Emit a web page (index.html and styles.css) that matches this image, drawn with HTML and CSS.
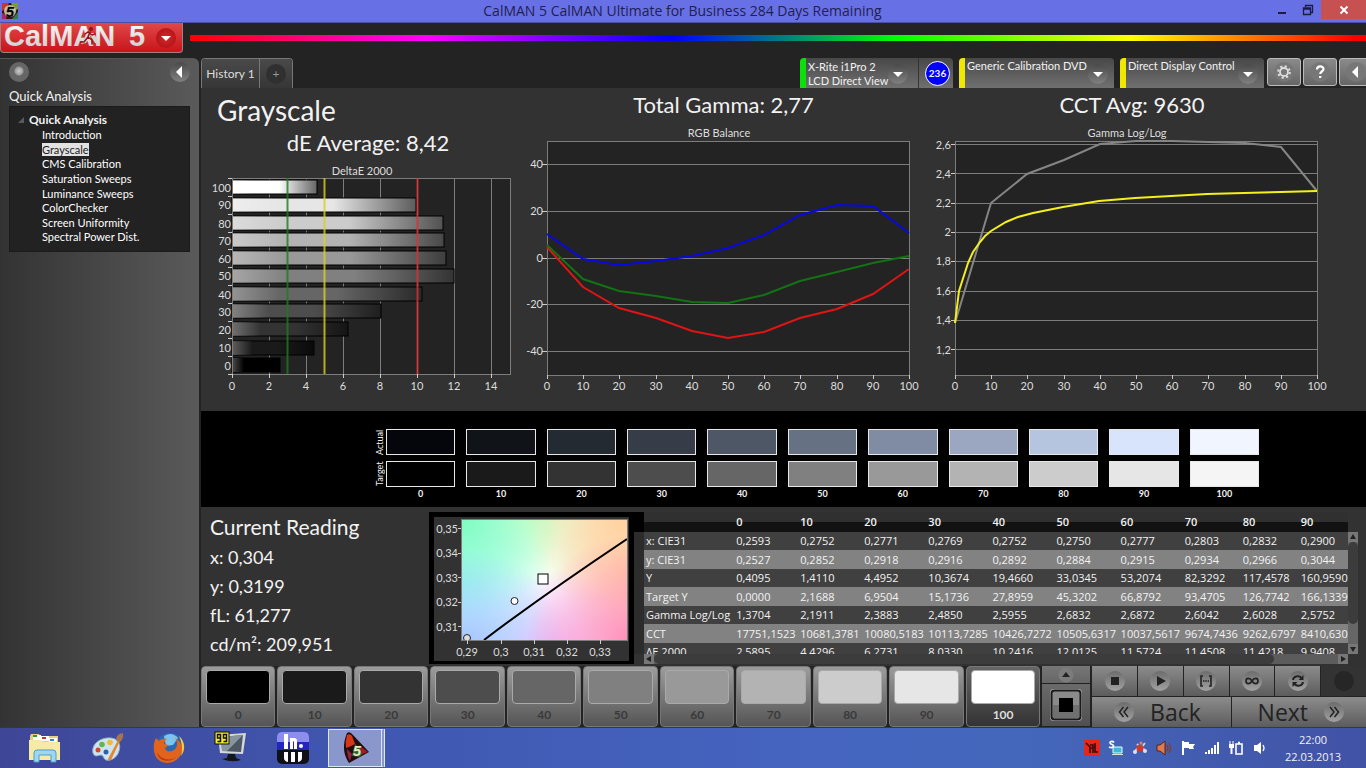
FILE: index.html
```html
<!DOCTYPE html>
<html lang="en">
<head>
  <meta charset="UTF-8" />
  <meta name="viewport" content="width=device-width, initial-scale=1.0"/>
  <title>CalMAN 5</title>
  <link rel="stylesheet" href="styles.css">
</head>
<body>
  <header class="titlebar">
    <svg class="app-icon" viewBox="0 0 16 16" width="16" height="16">
      <rect width="16" height="16" fill="#3a1518"/>
      <path d="M0 0h7l-3 6-4 2z" fill="#c33a2c"/><path d="M9 0h7v6l-4 2z" fill="#7b9a3a"/><path d="M0 10l5 2-1 4H0z" fill="#a02b63"/><path d="M16 9v7h-6z" fill="#2c7d52"/>
      <circle cx="8" cy="8" r="6" fill="#d9dcc0" opacity=".8"/>
      <text x="8" y="14" text-anchor="middle" class="icon-five">5</text>
    </svg>
    <h1>CalMAN 5 CalMAN Ultimate for Business 284 Days Remaining</h1>
    <div class="window-controls">
      <button aria-label="Minimize"><svg viewBox="0 0 10 10" width="10" height="10"><path d="M1 7h8v2H1z" fill="#1c1c3c"/></svg></button>
      <button aria-label="Restore"><svg viewBox="0 0 12 12" width="12" height="12"><path d="M3.500 3V1.500h7v7H9M1.500 4h7v6.500h-7zM1 5h8" fill="none" stroke="#1c1c3c" stroke-width="1.300"/></svg></button>
      <button class="close" aria-label="Close"><svg viewBox="0 0 10 10" width="10" height="10"><path d="M1.500 1.500l7 7m0-7l-7 7" stroke="#fff" stroke-width="2"/></svg></button>
    </div>
  </header>

  <div class="brandbar">
    <button class="logo" aria-label="CalMAN 5 menu">
      <svg viewBox="0 0 181 29" width="181" height="29">
        <defs>
          <linearGradient id="silver" x1="0" y1="0" x2="0" y2="1"><stop offset="0" stop-color="#fff"/><stop offset="1" stop-color="#c9c6c6"/></linearGradient>
          <radialGradient id="redKnob"><stop offset="0" stop-color="#d8262a"/><stop offset="1" stop-color="#b4161a"/></radialGradient>
        </defs>
        <text x="3" y="23">CalMAN</text><text x="128" y="23">5</text>
        <path d="M80 21l6-11h7l5 11-4-1-5-8-4 8z" fill="#d8d4d4"/>
        <g stroke="#8f1518" stroke-width="1.500" fill="none" stroke-linecap="round"><circle cx="90" cy="6" r="1.300" fill="#8f1518"/><path d="M89 9l-2 5 4 3v4M87 14l-4 5h-3M84 11l3-2 4 3 3-1"/></g>
        <circle cx="165" cy="15" r="10" fill="url(#redKnob)"/>
        <path d="M160 13h10l-5 5z" fill="#fff"/>
      </svg>
    </button>
    <div class="rainbow"></div>
  </div>

  <div class="workspace">
    <nav class="sidebar">
      <div class="sidebar-top">
        <button class="knob pin" aria-label="Pin"></button>
        <button class="knob" aria-label="Collapse"><svg viewBox="0 0 20 20" width="20" height="20"><path d="M12 4v12L6 10z" fill="#fff"/></svg></button>
      </div>
      <h2>Quick Analysis</h2>
      <div class="tree">
        <p><svg viewBox="0 0 6 6" width="6" height="6"><path d="M6 0v6H0z" fill="#5a5a5a"/></svg>Quick Analysis</p>
        <ul>
          <li><a href="#">Introduction</a></li>
          <li><a href="#" class="current">Grayscale</a></li>
          <li><a href="#">CMS Calibration</a></li>
          <li><a href="#">Saturation Sweeps</a></li>
          <li><a href="#">Luminance Sweeps</a></li>
          <li><a href="#">ColorChecker</a></li>
          <li><a href="#">Screen Uniformity</a></li>
          <li><a href="#">Spectral Power Dist.</a></li>
        </ul>
      </div>
    </nav>

    <main>
      <div class="tabs">
        <div class="history">
          <button class="tab">History 1</button>
          <button class="tab add" aria-label="Add history"><span>+</span></button>
        </div>
        <div class="devices">
          <div class="device meter">
            <button class="device-button">X-Rite i1Pro 2<br>LCD Direct View<span class="knob"><svg viewBox="0 0 20 20" width="20" height="20"><path d="M5 8h10l-5 5z" fill="#fff"/></svg></span></button>
            <span class="count">236</span>
          </div>
          <div class="device source">
            <button class="device-button">Generic Calibration DVD<span class="knob"><svg viewBox="0 0 20 20" width="20" height="20"><path d="M5 8h10l-5 5z" fill="#fff"/></svg></span></button>
          </div>
          <div class="device display">
            <button class="device-button">Direct Display Control<span class="knob"><svg viewBox="0 0 20 20" width="20" height="20"><path d="M5 8h10l-5 5z" fill="#fff"/></svg></span></button>
          </div>
          <div class="tools">
            <button aria-label="Settings"><svg viewBox="0 0 22 22" width="22" height="22"><circle cx="11" cy="11" r="10" fill="#777"/><circle cx="11" cy="11" r="4" fill="none" stroke="#ddd" stroke-width="1.800"/><circle cx="11" cy="11" r="5.800" fill="none" stroke="#ddd" stroke-width="2" stroke-dasharray="2.200 2.350"/></svg></button>
            <button aria-label="Help"><svg viewBox="0 0 22 22" width="22" height="22"><circle cx="11" cy="11" r="10" fill="#777"/><path d="M8 8.500c0-4 6.500-4 6.500-.5 0 2.500-3.300 2.500-3.300 5M11.200 15v2" fill="none" stroke="#fff" stroke-width="2.200"/></svg></button>
            <button aria-label="Hide panel"><svg viewBox="0 0 22 22" width="22" height="22"><circle cx="11" cy="11" r="10" fill="#777"/><path d="M13 5v12l-6-6z" fill="#fff"/></svg></button>
          </div>
        </div>
      </div>

      <section class="charts">
        <div class="chart">
          <h2 class="page-title">Grayscale</h2>
          <h3 class="de-average">dE Average: 8,42</h3>
          <svg viewBox="-31 -14 322 236">
            <defs>
              <linearGradient id="shade"><stop offset="0" stop-color="#fff" stop-opacity=".3"/><stop offset=".25" stop-color="#fff" stop-opacity="0"/><stop offset=".55" stop-color="#000" stop-opacity="0"/><stop offset="1" stop-color="#000" stop-opacity=".6"/></linearGradient>
            </defs>
            <text x="130" y="-3" class="mid">DeltaE 2000</text>
            <rect width="278" height="196" class="plot"/>
            <path class="grid" d="M37 0v196M74 0v196M111 0v196M148 0v196M185 0v196M222 0v196M259 0v196"/>
            <g class="bars">
              <rect y="2" width="85" height="14" fill="#fff"/>
              <rect y="20" width="184" height="14" fill="#e6e6e6"/>
              <rect y="38" width="211" height="14" fill="#ccc"/>
              <rect y="55" width="212" height="14" fill="#b3b3b3"/>
              <rect y="73" width="214" height="14" fill="#999"/>
              <rect y="91" width="222" height="14" fill="#808080"/>
              <rect y="109" width="190" height="14" fill="#666"/>
              <rect y="126" width="149" height="14" fill="#4d4d4d"/>
              <rect y="144" width="116" height="14" fill="#333"/>
              <rect y="163" width="82" height="14" fill="#1a1a1a"/>
              <rect y="180" width="48" height="14" fill="#000"/>
            </g>
            <g fill="url(#shade)">
              <rect y="2" width="85" height="14"/><rect y="20" width="184" height="14"/><rect y="38" width="211" height="14"/><rect y="55" width="212" height="14"/><rect y="73" width="214" height="14"/><rect y="91" width="222" height="14"/><rect y="109" width="190" height="14"/><rect y="126" width="149" height="14"/><rect y="144" width="116" height="14"/><rect y="163" width="82" height="14"/><rect y="180" width="48" height="14"/>
            </g>
            <rect width="278" height="196" class="frame"/>
            <path class="tick" d="M-4 0h4M-4 18h4M-4 36h4M-4 54h4M-4 71h4M-4 89h4M-4 107h4M-4 125h4M-4 143h4M-4 160h4M-4 178h4M-4 196h4M0 196v4M37 196v4M74 196v4M111 196v4M148 196v4M185 196v4M222 196v4M259 196v4"/>
            <path d="M55.500 0v196" stroke="#1f7a1f" stroke-width="2" opacity=".8"/>
            <path d="M92.500 0v196" stroke="#d8d21c" stroke-width="2" opacity=".8"/>
            <path d="M185.500 0v196" stroke="#e03030" stroke-width="2" opacity=".8"/>
            <g class="end">
              <text x="-1" y="14">100</text><text x="-1" y="31">90</text><text x="-1" y="50">80</text><text x="-1" y="67">70</text><text x="-1" y="85">60</text><text x="-1" y="102">50</text><text x="-1" y="121">40</text><text x="-1" y="138">30</text><text x="-1" y="156">20</text><text x="-1" y="174">10</text><text x="-1" y="192">0</text>
            </g>
            <g class="mid">
              <text x="0" y="212">0</text><text x="37" y="212">2</text><text x="74" y="212">4</text><text x="111" y="212">6</text><text x="148" y="212">8</text><text x="185" y="212">10</text><text x="222" y="212">12</text><text x="259" y="212">14</text>
            </g>
          </svg>
        </div>

        <div class="chart">
          <h3>Total Gamma: 2,77</h3>
          <svg viewBox="-24 -15 401 269">
            <text x="172" y="-4" class="mid">RGB Balance</text>
            <rect width="362" height="234" class="plot"/>
            <path class="grid" d="M0 23h362M0 70h362M0 117h362M0 163h362M0 210h362"/>
            <rect width="362" height="234" class="frame"/>
            <path class="tick" d="M-5 23h5M-5 70h5M-5 117h5M-5 163h5M-5 210h5M0 234v4M36 234v4M72 234v4M109 234v4M145 234v4M181 234v4M217 234v4M253 234v4M290 234v4M326 234v4M362 234v4"/>
            <polyline class="line" stroke="#e01414" points="0,106 36,146 72,167 109,177 145,190 181,197 217,191 253,177 290,168 326,153 362,128"/>
            <polyline class="line" stroke="#127312" points="0,104 36,138 72,150 109,155 145,161 181,162 217,154 253,140 290,131 326,122 362,115"/>
            <polyline class="line" stroke="#0808e0" points="0,93 36,118 72,124 109,120 145,115 181,107 217,94 253,74 290,64 326,65 362,92"/>
            <g class="end">
              <text x="-4" y="27">40</text><text x="-4" y="74">20</text><text x="-4" y="121">0</text><text x="-4" y="167">-20</text><text x="-4" y="214">-40</text>
            </g>
            <g class="mid">
              <text x="0" y="249">0</text><text x="36" y="249">10</text><text x="72" y="249">20</text><text x="109" y="249">30</text><text x="145" y="249">40</text><text x="181" y="249">50</text><text x="217" y="249">60</text><text x="253" y="249">70</text><text x="290" y="249">80</text><text x="326" y="249">90</text><text x="362" y="249">100</text>
            </g>
          </svg>
        </div>

        <div class="chart">
          <h3>CCT Avg: 9630</h3>
          <svg viewBox="-31 -15 416 269">
            <text x="172" y="-4" class="mid">Gamma Log/Log</text>
            <rect width="362" height="234" class="plot"/>
            <path class="grid" d="M0 3h362M0 32h362M0 62h362M0 91h362M0 120h362M0 150h362M0 179h362M0 208h362"/>
            <rect width="362" height="234" class="frame"/>
            <path class="tick" d="M-4 3h4M-4 32h4M-4 62h4M-4 91h4M-4 120h4M-4 150h4M-4 179h4M-4 208h4M0 234v4M36 234v4M72 234v4M109 234v4M145 234v4M181 234v4M217 234v4M253 234v4M290 234v4M326 234v4M362 234v4"/>
            <polyline class="line" stroke="#858585" points="0,182 36,62 72,33 109,19 145,3 181,0 217,0 253,1 290,2 326,6 362,50"/>
            <polyline class="line" stroke="#f4f01e" points="0,182 4,150 13,122 18,111 25,101 30,95 36,90 51,81 63,76 78,72 108,66 144,60 180,57 216,55 252,53 289,52 326,51 362,50"/>
            <g class="end">
              <text x="-4" y="8">2,6</text><text x="-4" y="37">2,4</text><text x="-4" y="66">2,2</text><text x="-4" y="95">2</text><text x="-4" y="124">1,8</text><text x="-4" y="154">1,6</text><text x="-4" y="183">1,4</text><text x="-4" y="213">1,2</text>
            </g>
            <g class="mid">
              <text x="0" y="249">0</text><text x="36" y="249">10</text><text x="72" y="249">20</text><text x="109" y="249">30</text><text x="145" y="249">40</text><text x="181" y="249">50</text><text x="217" y="249">60</text><text x="253" y="249">70</text><text x="290" y="249">80</text><text x="326" y="249">90</text><text x="362" y="249">100</text>
            </g>
          </svg>
        </div>
      </section>

      <section class="swatches">
        <div class="swatch-row">
          <span class="side">Actual</span>
          <i class="a0"></i><i class="a10"></i><i class="a20"></i><i class="a30"></i><i class="a40"></i><i class="a50"></i><i class="a60"></i><i class="a70"></i><i class="a80"></i><i class="a90"></i><i class="a100"></i>
        </div>
        <div class="swatch-row">
          <span class="side">Target</span>
          <i class="g0"></i><i class="g10"></i><i class="g20"></i><i class="g30"></i><i class="g40"></i><i class="g50"></i><i class="g60"></i><i class="g70"></i><i class="g80"></i><i class="g90"></i><i class="g100"></i>
        </div>
        <div class="swatch-row labels">
          <span class="side"></span>
          <b>0</b><b>10</b><b>20</b><b>30</b><b>40</b><b>50</b><b>60</b><b>70</b><b>80</b><b>90</b><b>100</b>
        </div>
      </section>

      <section class="readings">
        <div class="current-reading">
          <h3>Current Reading</h3>
          <p>x: 0,304</p>
          <p>y: 0,3199</p>
          <p>fL: 61,277</p>
          <p>cd/m²: 209,951</p>
        </div>

        <div class="cie">
          <svg viewBox="-27 -2 195 144" width="195" height="144">
            <defs>
              <radialGradient id="cGreen"><stop offset="0" stop-color="#7dfcc0"/><stop offset="1" stop-color="#7dfcc0" stop-opacity="0"/></radialGradient>
              <radialGradient id="cLime"><stop offset="0" stop-color="#d2ffc0"/><stop offset="1" stop-color="#d2ffc0" stop-opacity="0"/></radialGradient>
              <radialGradient id="cOrange"><stop offset="0" stop-color="#ffd2a0"/><stop offset="1" stop-color="#ffd2a0" stop-opacity="0"/></radialGradient>
              <radialGradient id="cPink"><stop offset="0" stop-color="#ff86b4"/><stop offset="1" stop-color="#ff86b4" stop-opacity="0"/></radialGradient>
              <radialGradient id="cViolet"><stop offset="0" stop-color="#eebcff"/><stop offset="1" stop-color="#eebcff" stop-opacity="0"/></radialGradient>
              <radialGradient id="cBlue"><stop offset="0" stop-color="#a3c2ff"/><stop offset="1" stop-color="#a3c2ff" stop-opacity="0"/></radialGradient>
              <radialGradient id="cCyan"><stop offset="0" stop-color="#a0ffff"/><stop offset="1" stop-color="#a0ffff" stop-opacity="0"/></radialGradient>
              <clipPath id="cieClip"><rect width="166" height="121"/></clipPath>
            </defs>
            <g clip-path="url(#cieClip)">
              <rect width="166" height="121" fill="#fff"/>
              <circle cx="75" cy="-15" r="90" fill="url(#cLime)"/>
              <circle cx="160" cy="0" r="95" fill="url(#cOrange)"/>
              <circle cx="175" cy="50" r="80" fill="url(#cOrange)"/>
              <circle cx="90" cy="135" r="85" fill="url(#cViolet)"/>
              <circle cx="-5" cy="62" r="95" fill="url(#cCyan)"/>
              <circle cx="0" cy="0" r="100" fill="url(#cGreen)"/>
              <circle cx="5" cy="130" r="100" fill="url(#cBlue)"/>
              <circle cx="175" cy="125" r="110" fill="url(#cPink)"/>
              <path d="M23 121Q85 74 166 20" fill="none" stroke="#000" stroke-width="2"/>
              <circle cx="6" cy="119" r="3.500" fill="#ddd" stroke="#222"/>
            </g>
            <rect width="166" height="121" class="frame"/>
            <rect x="77" y="55" width="10" height="10" fill="#fff" stroke="#000"/>
            <circle cx="53.500" cy="82" r="3.500" fill="#fff" stroke="#222"/>
            <path class="tick" d="M-3 9h3M-3 34h3M-3 58h3M-3 83h3M-3 107h3M6 121v4M40 121v4M73 121v4M106 121v4M139 121v4"/>
            <g class="end"><text x="-3" y="14">0,35</text><text x="-3" y="38">0,34</text><text x="-3" y="63">0,33</text><text x="-3" y="87">0,32</text><text x="-3" y="112">0,31</text></g>
            <g class="mid"><text x="6" y="137">0,29</text><text x="40" y="137">0,3</text><text x="73" y="137">0,31</text><text x="106" y="137">0,32</text><text x="139" y="137">0,33</text></g>
          </svg>
        </div>

        <div class="data">
          <div class="data-view">
            <table>
              <colgroup><col class="c-label"><col><col><col><col><col><col><col><col class="c-narrow"><col class="c-narrow"><col></colgroup>
              <thead>
                <tr><td></td><th>0</th><th>10</th><th>20</th><th>30</th><th>40</th><th>50</th><th>60</th><th>70</th><th>80</th><th>90</th></tr>
              </thead>
              <tbody>
                <tr><th>x: CIE31</th><td>0,2593</td><td>0,2752</td><td>0,2771</td><td>0,2769</td><td>0,2752</td><td>0,2750</td><td>0,2777</td><td>0,2803</td><td>0,2832</td><td>0,2900</td></tr>
                <tr><th>y: CIE31</th><td>0,2527</td><td>0,2852</td><td>0,2918</td><td>0,2916</td><td>0,2892</td><td>0,2884</td><td>0,2915</td><td>0,2934</td><td>0,2966</td><td>0,3044</td></tr>
                <tr><th>Y</th><td>0,4095</td><td>1,4110</td><td>4,4952</td><td>10,3674</td><td>19,4660</td><td>33,0345</td><td>53,2074</td><td>82,3292</td><td>117,4578</td><td>160,9590</td></tr>
                <tr><th>Target Y</th><td>0,0000</td><td>2,1688</td><td>6,9504</td><td>15,1736</td><td>27,8959</td><td>45,3202</td><td>66,8792</td><td>93,4705</td><td>126,7742</td><td>166,1339</td></tr>
                <tr><th>Gamma Log/Log</th><td>1,3704</td><td>2,1911</td><td>2,3883</td><td>2,4850</td><td>2,5955</td><td>2,6832</td><td>2,6872</td><td>2,6042</td><td>2,6028</td><td>2,5752</td></tr>
                <tr><th>CCT</th><td>17751,1523</td><td>10681,3781</td><td>10080,5183</td><td>10113,7285</td><td>10426,7272</td><td>10505,6317</td><td>10037,5617</td><td>9674,7436</td><td>9262,6797</td><td>8410,630</td></tr>
                <tr><th>ΔE 2000</th><td>2,5895</td><td>4,4296</td><td>6,2731</td><td>8,0330</td><td>10,2416</td><td>12,0125</td><td>11,5724</td><td>11,4508</td><td>11,4218</td><td>9,9408</td></tr>
              </tbody>
            </table>
          </div>
          <div class="vscroll">
            <svg viewBox="0 0 10 10" width="10" height="10"><path d="M5 2l3 5H2z" fill="#222"/></svg>
            <span class="thumb"></span>
            <svg viewBox="0 0 10 10" width="10" height="10"><path d="M5 8l3-5H2z" fill="#222"/></svg>
          </div>
          <div class="hscroll">
            <svg viewBox="0 0 10 10" width="10" height="10"><path d="M2 5l5-3v6z" fill="#222"/></svg>
            <span class="thumb"></span>
            <svg viewBox="0 0 10 10" width="10" height="10"><path d="M8 5L3 2v6z" fill="#222"/></svg>
          </div>
        </div>
      </section>

      <section class="controls">
        <div class="patches">
          <button><i class="g0"></i>0</button>
          <button><i class="g10"></i>10</button>
          <button><i class="g20"></i>20</button>
          <button><i class="g30"></i>30</button>
          <button><i class="g40"></i>40</button>
          <button><i class="g50"></i>50</button>
          <button><i class="g60"></i>60</button>
          <button><i class="g70"></i>70</button>
          <button><i class="g80"></i>80</button>
          <button><i class="g90"></i>90</button>
          <button class="selected"><i class="white"></i>100</button>
        </div>
        <div class="pattern">
          <button aria-label="Expand"><svg viewBox="0 0 16 16" width="16" height="16"><circle cx="8" cy="8" r="7.500" fill="#7c7c7c"/><path d="M8 5l4 5H4z" fill="#222"/></svg></button>
          <button aria-label="Window pattern"><svg viewBox="0 0 34 34" width="34" height="34"><rect x="1" y="1" width="32" height="32" rx="4" fill="#bbb"/><rect x="2.500" y="2.500" width="29" height="29" rx="3" fill="#8a8a8a" stroke="#1a1a1a" stroke-width="2"/><path d="M4 17h26v13H4z" fill="#707070"/><path d="M10 10h14v14H10z" fill="#000"/></svg></button>
        </div>
        <div class="transport">
          <div class="transport-row">
            <button aria-label="Stop"><svg viewBox="0 0 20 20" width="20" height="20"><circle cx="10" cy="10" r="10" fill="url(#knob)"/><path d="M6 6h8v8H6z" fill="#222"/></svg></button>
            <button aria-label="Play"><svg viewBox="0 0 20 20" width="20" height="20"><circle cx="10" cy="10" r="10" fill="url(#knob)"/><path d="M7 5l9 5-9 5z" fill="#222"/></svg></button>
            <button aria-label="Read series"><svg viewBox="0 0 20 20" width="20" height="20"><circle cx="10" cy="10" r="10" fill="url(#knob)"/><path d="M7 5H5v10h2M13 5h2v10h-2M7 10h1.500M9.300 10h1.500M11.700 10H13" fill="none" stroke="#222" stroke-width="1.600"/></svg></button>
            <button aria-label="Continuous"><svg viewBox="0 0 20 20" width="20" height="20"><circle cx="10" cy="10" r="10" fill="url(#knob)"/><path d="M10 10c-2-3.500-6-3.500-6 0s4 3.500 6 0 6-3.500 6 0-4 3.500-6 0z" fill="none" stroke="#222" stroke-width="1.700"/></svg></button>
            <button aria-label="Refresh"><svg viewBox="0 0 20 20" width="20" height="20"><circle cx="10" cy="10" r="10" fill="url(#knob)"/><path d="M5 9c.5-4 6-5 8.500-2M15 11c-.5 4-6 5-8.500 2" fill="none" stroke="#222" stroke-width="2"/><path d="M15.500 4v5h-5zM4.500 16v-5h5z" fill="#222"/></svg></button>
            <button class="dark" aria-label="Status"><svg viewBox="0 0 20 20" width="20" height="20"><circle cx="10" cy="10" r="10" fill="#262626"/></svg></button>
          </div>
          <div class="transport-row big">
            <button><svg viewBox="0 0 20 20" width="20" height="20"><defs><linearGradient id="knob" x1="0" y1="0" x2="0" y2="1"><stop offset="0" stop-color="#6c6c6c"/><stop offset="1" stop-color="#a2a2a2"/></linearGradient></defs><circle cx="10" cy="10" r="10" fill="url(#knob)"/><path d="M9.500 5L5.500 10l4 5M14 5l-4 5 4 5" fill="none" stroke="#222" stroke-width="1.500"/></svg>Back</button>
            <button>Next<svg viewBox="0 0 20 20" width="20" height="20"><circle cx="10" cy="10" r="10" fill="url(#knob)"/><path d="M6 5l4 5-4 5M10.500 5l4 5-4 5" fill="none" stroke="#222" stroke-width="1.500"/></svg></button>
          </div>
        </div>
      </section>
    </main>
  </div>

  <footer class="taskbar">
    <div class="apps">
      <button aria-label="File Explorer"><svg viewBox="0 0 34 32" width="34" height="32">
        <path d="M2 4l1-2h8l1 2h18v22H2z" fill="#e6cf7e"/><path d="M5 3h8v5H5z" fill="#fff"/><path d="M5 3h4v2H5z" fill="#2c9d3c"/><path d="M13 4h8v5h-8z" fill="#fff"/><path d="M14 5h4v2h-4z" fill="#c33"/><path d="M21 6h8v4h-8z" fill="#fff"/><path d="M22 7h4v2h-4z" fill="#38c"/>
        <path d="M1 8h12l2 2h17v18H1z" fill="#f7eaa6"/><path d="M6 30V21q0-3 3-3h16q3 0 3 3v9h-5v-7H11v7z" fill="#9fd6f0" stroke="#4d9fcb"/>
      </svg></button>
      <button aria-label="Paint"><svg viewBox="0 0 34 32" width="34" height="32">
        <path d="M3 21C1 11 12 5 21 6c8 1 10 7 8 13-2 7-8 10-13 9-3-1-2-5-5-5-3 0-6 3-8-2z" fill="#cfe4f2" stroke="#8fb0cc"/>
        <circle cx="8" cy="18" r="2.500" fill="#d9452b"/><circle cx="12" cy="12.500" r="2.800" fill="#66b54a"/><circle cx="20" cy="10.500" r="2.800" fill="#f0b93a"/><circle cx="16" cy="20" r="2.500" fill="#2e5fae"/>
        <path d="M28 8l2 1-9 19q-3 2-3-1z" fill="#e08a2c"/><path d="M26 8q0-6 7-7 1 6-3 9z" fill="#a8744c"/>
      </svg></button>
      <button aria-label="Firefox"><svg viewBox="0 0 34 32" width="34" height="32">
        <circle cx="18" cy="15" r="14" fill="#2a68b4"/><path d="M12 4q8-5 14 2l-5 7-7 1z" fill="#7cc4ee"/>
        <path d="M4 6l3 3c3-3 7-2 8-2-3 2-3 4-3 5l5 1-4 3c1 5 8 4 11 0 2-4 1-7-1-10 9 5 8 14 5 18-6 9-19 9-24 1C1 19 1 11 4 6z" fill="#e2641c"/>
        <path d="M27 4c6 5 7 14 2 20 2-7 1-13-2-20z" fill="#f8c93c"/><path d="M5 20c3 7 12 10 20 5-7 6-19 5-20-5z" fill="#b8380f"/>
      </svg></button>
      <button aria-label="System Monitor"><svg viewBox="0 0 34 32" width="34" height="32">
        <path d="M4 3l28-2-3 21-23-1z" fill="#d5d8da"/><path d="M7 5l22-2-2 17-19-1z" fill="#4c5965"/><path d="M7 5l22-2-16 16H8z" fill="#8795a0"/><path d="M14 22h7l1 4 5 2q-9 3-19-1l5-1z" fill="#14161a"/>
        <rect x="1" y="0" width="14" height="12" fill="#f7ef22" stroke="#111"/><path d="M6.500 6H3.500V2.500h3v7h-3M12.500 6h-3V2.500h3v7h-3" fill="none" stroke="#111" stroke-width="1.500"/>
      </svg></button>
      <button aria-label="HCFR"><svg viewBox="0 0 34 32" width="34" height="32">
        <rect x="1" width="32" height="32" rx="5" fill="#101018"/><path d="M1 18V5q0-5 5-5h22q5 0 5 5v13z" fill="#2424c0"/><path d="M1 10V5q0-5 5-5h22q5 0 5 5v5z" fill="#8d8df0"/>
        <path d="M8 2h4v15H8zM14 6h4q3 0 3 3v8h-3V9h-1v8h-3zM8 20h4v10q-4-1-4-4zM15 20h4v10h-4zM22 20h4v6q0 3-4 4z" fill="#fff"/><circle cx="25" cy="14" r="2" fill="#fff"/>
      </svg></button>
      <button class="running" aria-label="CalMAN"><svg viewBox="0 0 34 32" width="34" height="32">
        <path d="M8 1q3-2 6 2l16 17-20 11Q1 18 8 1z" fill="#240c0c"/><path d="M8 3q3-2 5 1l3 8-6 3-3 1q-1-6 1-13z" fill="#d3381b"/><path d="M16 12l10 8-6 5-7-1z" fill="#35632c"/><path d="M20 13l9 7-6 2z" fill="#a01c28"/><path d="M8 17l5 5-2 7q-3-5-3-12z" fill="#8c2440"/>
        <text x="18" y="24" text-anchor="middle" class="task-five">5</text>
      </svg></button>
    </div>
    <div class="tray">
      <svg viewBox="0 0 16 16" width="16" height="16"><path d="M0 0h16v16H0z" fill="#e8261c"/><path d="M2 3l4 4v6M6 5h3v8M6 8h3M11 3v9h3M11 7h-1" fill="none" stroke="#3a0a0a" stroke-width="1.600"/></svg>
      <svg viewBox="0 0 16 16" width="16" height="16"><path d="M5 7h9v6H5z" fill="#42b6d8" stroke="#dff"/><path d="M4 14h11v1H4z" fill="#ddd"/><path d="M6 2.500Q5 1 3 1.500 1 2.500 3 4q3 1 2.500 2.500Q4 8.500 1 7" fill="none" stroke="#fff" stroke-width="1.600"/></svg>
      <svg viewBox="0 0 16 16" width="16" height="16"><path d="M2 12l5-5 6 3M5 4l4 4 4-5" stroke="#c9d0dc" stroke-width="2" fill="none"/><circle cx="8" cy="8" r="3.500" fill="#cf3a2a"/><circle cx="3" cy="12" r="2" fill="#dcdfe6"/><circle cx="13" cy="11" r="2" fill="#dcdfe6"/><circle cx="9" cy="3" r="1.500" fill="#e77"/></svg>
      <svg viewBox="0 0 16 16" width="16" height="16"><path d="M1 5h3l5-4v14l-5-4H1z" fill="#e07a50" stroke="#5a2210"/><path d="M11 5q2 3 0 6M13 3q3 5 0 10" fill="none" stroke="#8a3a28" stroke-width="1.300"/></svg>
      <svg viewBox="0 0 16 16" width="16" height="16"><path d="M2 1h2v14H2z" fill="#fff"/><path d="M4 2h5v2h6l-2 3 1 2H9V8H4z" fill="#fff"/></svg>
      <svg viewBox="0 0 16 16" width="16" height="16"><path d="M1 12h2v2H1zM4 10h2v4H4zM7 8h2v6H7zM10 5h2v9h-2zM13 2h2v12h-2z" fill="#fff"/></svg>
      <svg viewBox="0 0 16 16" width="16" height="16"><path d="M8 4h6v10H8zM10 2.500h2" fill="none" stroke="#fff" stroke-width="1.600"/><path d="M1 4h5v4H4.500v6h-2V8H1zM1.500 1h1v3h-1zM4.500 1h1v3h-1z" fill="#fff"/></svg>
      <svg viewBox="0 0 16 16" width="16" height="16"><path d="M2 5h3l4-3v12l-4-3H2z" fill="#fff"/><path d="M11 5q2 3 0 6" fill="none" stroke="#fff" stroke-width="1.300"/></svg>
    </div>
    <div class="clock"><span>22:00</span><span>22.03.2013</span></div>
  </footer>
</body>
</html>
```

FILE: styles.css
```css
:root {
  --ui: Lato, "Open Sans", sans-serif;
  --segoe: "Open Sans", "Noto Sans", sans-serif;
  --bg: #232323;
  --panel: #323232;
  --text: #f2f2f2;
}

* {
  box-sizing: border-box;
}

body {
  margin: 0;
  min-height: 100vh;
  display: flex;
  flex-direction: column;
  background: var(--bg);
  color: var(--text);
  font-family: var(--ui);
  font-size: 12px;
  overflow: hidden;
}

h1, h2, h3, p, ul {
  margin: 0;
  padding: 0;
  font-weight: normal;
}

button {
  border: none;
  padding: 0;
  margin: 0;
  background: none;
  color: inherit;
  font-family: inherit;
  cursor: pointer;
}

svg {
  display: block;
  overflow: visible;
}

/* title bar */
.titlebar {
  display: flex;
  align-items: center;
  height: 23px;
  background: #6870e6;
  border-bottom: 1px solid #4a50a8;
}

.app-icon {
  margin-left: 2px;
}

.titlebar h1 {
  flex: 1;
  padding-left: 78px;
  text-align: center;
  font-family: var(--segoe);
  font-size: 14px;
  line-height: 22px;
  color: #1f2150;
}

.window-controls {
  display: flex;
  align-self: flex-start;
}

.window-controls button {
  display: flex;
  align-items: center;
  justify-content: center;
  width: 26px;
  height: 19px;
}

.window-controls .close {
  width: 45px;
  background: #c75050;
}

/* logo and rainbow line */
.brandbar {
  display: flex;
  height: 35px;
}

.logo {
  height: 30px;
  background: linear-gradient(#e04848, #c8141a);
  border: 1px solid #a08080;
  border-top: none;
  border-radius: 0 0 4px 4px;
}

.rainbow {
  flex: 1;
  height: 6px;
  margin: 12px 0 0 7px;
  background: linear-gradient(to right, #f00 0%, #f0f 20%, #00f 41%, #0f0 60%, #ff0 80%, #f00 99%);
}

/* sidebar */
.workspace {
  flex: 1;
  display: flex;
  min-height: 0;
}

.sidebar {
  width: 199px;
  flex-shrink: 0;
  padding: 3px 9px;
  background: linear-gradient(to right, #333, #5a5a5a);
  border-top: 1px solid #555;
  border-radius: 0 6px 0 0;
}

.sidebar-top {
  display: flex;
  justify-content: space-between;
}

.knob {
  display: block;
  width: 20px;
  height: 20px;
  border-radius: 50%;
  background: linear-gradient(#4a4a4a, #808080);
}

.pin {
  background: radial-gradient(circle at 50% 45%, #ccc 0, #999 4px, #666 5px, #666 100%);
}

.sidebar h2 {
  font-size: 13px;
  line-height: 16px;
  margin-top: 6px;
}

.tree {
  margin-top: 2px;
  padding: 5px 8px;
  height: 146px;
  background: #222;
  border: 1px solid #1b1b1b;
}

.tree p {
  display: flex;
  align-items: center;
  gap: 5px;
  font-size: 12px;
  line-height: 15px;
  font-weight: bold;
}

.tree ul {
  display: grid;
  grid-auto-rows: 1fr;
  height: 117px;
  padding-left: 24px;
  margin-top: 1px;
  font-size: 11px;
  line-height: 14px;
  list-style: none;
}

.tree a {
  color: #fff;
  text-decoration: none;
}

.tree .current {
  background: #e2e2e2;
  color: #222;
}

/* tabs */
main {
  flex: 1;
  min-width: 0;
  display: flex;
  flex-direction: column;
  margin-left: 2px;
  background: var(--panel);
}

.tabs {
  display: flex;
  justify-content: space-between;
  height: 30px;
  background: var(--bg);
  overflow: hidden;
}

.history, .devices, .tools {
  display: flex;
}

.history {
  border: 1px solid #777;
  border-bottom: none;
  border-radius: 4px 4px 0 0;
}

.tab {
  width: 57px;
  font-size: 12px;
  color: #ddd;
  background: linear-gradient(#4a4a4a, #363636);
  border-radius: 4px 0 0 0;
}

.add {
  width: 33px;
  border-left: 1px solid #777;
  border-radius: 0 4px 0 0;
}

.add span {
  display: block;
  width: 20px;
  margin: 0 auto;
  line-height: 20px;
  border-radius: 50%;
  background: #303030;
  color: #999;
}

.device {
  display: flex;
  margin-right: 6px;
  border-left: 6px solid #f0e800;
  border-radius: 4px 4px 0 0;
  background: linear-gradient(#484848, #707070);
}

.meter {
  border-left-color: #0be00b;
}

.device-button {
  position: relative;
  width: 113px;
  padding: 1px 0 0 2px;
  text-align: left;
  font-size: 11px;
  line-height: 14px;
  display: flex;
}

/* the arrow knob sits over the end of the label area */
.device-button .knob {
  position: absolute;
  right: 6px;
  top: 6px;
}

.meter .device-button {
  display: block;
  border-right: 1px solid #333;
}

.meter .knob {
  right: 10px;
}

.source .device-button {
  width: 149px;
}

.display .device-button {
  width: 138px;
}

.display {
  margin-right: 3px;
}

.count {
  align-self: center;
  width: 25px;
  margin: 0 3px 0 6px;
  line-height: 23px;
  border: 1px solid #fff;
  border-radius: 50%;
  background: #00f;
  font-size: 10px;
  font-weight: bold;
  text-align: center;
}

.tools {
  gap: 2px;
  margin-right: -7px;
}

.tools button {
  display: flex;
  align-items: center;
  justify-content: center;
  width: 34px;
  height: 28px;
  border: 1px solid #bbb;
  border-radius: 3px;
  background: linear-gradient(#8a8a8a, #666);
}

/* charts */
.charts {
  flex: 1;
  display: grid;
  grid-template-columns: 322fr 401fr 416fr;
  align-items: start;
  padding-right: 26px;
}

.chart svg {
  width: 100%;
  height: auto;
}

.chart h3 {
  font-size: 22px;
  line-height: 34px;
  height: 38px;
  text-align: center;
}

.chart .page-title {
  padding-left: 16px;
  font-size: 28px;
  line-height: 44px;
}

.chart .de-average {
  height: 32px;
  line-height: 22px;
  padding-left: 12px;
}

svg text {
  font-size: 11px;
  fill: #ddd;
}

svg .icon-five, svg .task-five {
  font: italic bold 15px "Liberation Sans", sans-serif;
  fill: #000;
}

svg .task-five {
  fill: #dfe8c0;
}

.logo svg text {
  font: bold 29px "Liberation Sans", sans-serif;
  fill: url(#silver);
}

.mid {
  text-anchor: middle;
}

.end {
  text-anchor: end;
}

.plot {
  fill: #232323;
}

.frame, .grid, .tick {
  fill: none;
  stroke: #7c7c7c;
  shape-rendering: crispEdges;
}

.tick {
  stroke: #ccc;
}

.bars rect {
  stroke: #000;
}

.line {
  fill: none;
  stroke-width: 2;
}

/* actual and target swatches */
.swatches {
  padding: 18px 107px 6px 173px;
  height: 96px;
  background: #000;
}

.swatch-row {
  display: flex;
  height: 26px;
  margin-bottom: 6px;
}

.swatch-row i {
  flex: 1;
  border: 1px solid #e8e8e8;
}

.swatch-row b {
  flex: 1;
}

.swatch-row i + i, .swatch-row b + b {
  margin-left: 11px;
}

.swatch-row .side {
  writing-mode: vertical-rl;
  transform: rotate(180deg);
  width: 12px;
  font-size: 9px;
  line-height: 12px;
  text-align: center;
  white-space: nowrap;
}

.swatches .labels {
  margin-top: -5px;
  height: 12px;
  font-size: 9px;
  line-height: 12px;
  text-align: center;
}

.a0 { background: #05060c; }
.a10 { background: #101418; }
.a20 { background: #232a31; }
.a30 { background: #373c49; }
.a40 { background: #4e5766; }
.a50 { background: #667184; }
.a60 { background: #7f8ca3; }
.a70 { background: #9ba7c0; }
.a80 { background: #b5c4df; }
.a90 { background: #d7e4fc; }
.a100 { background: #f0f5ff; }

.g0 { background: #000; }
.g10 { background: #1a1a1a; }
.g20 { background: #333; }
.g30 { background: #4d4d4d; }
.g40 { background: #666; }
.g50 { background: #808080; }
.g60 { background: #999; }
.g70 { background: #b3b3b3; }
.g80 { background: #ccc; }
.g90 { background: #e6e6e6; }
.g100 { background: #f5f5f5; }
.white { background: #fff; }

/* readings */
.readings {
  display: flex;
  height: 159px;
  padding-top: 5px;
}

.current-reading {
  flex: 0 0 228px;
  padding-left: 9px;
}

.current-reading h3 {
  font-size: 21px;
  line-height: 30px;
  margin-bottom: 1px;
}

.current-reading p {
  font-size: 18px;
  line-height: 29px;
}

.cie {
  flex: 0 0 auto;
  align-self: flex-start;
  border: 5px solid #000;
  border-bottom-width: 3px;
}

.data {
  flex: 1;
  min-width: 0;
  display: grid;
  grid-template-columns: 1fr 10px;
  grid-template-rows: 142px 10px;
  margin-right: 8px;
}

.data-view {
  overflow: hidden;
}

table {
  width: 729px;
  table-layout: fixed;
  border-collapse: collapse;
  font-family: var(--segoe);
  font-size: 11px;
}

col {
  width: 64px;
}

.c-label {
  width: 95px;
}

.c-narrow {
  width: 58px;
}

td, th {
  height: 18px;
  padding: 0 0 0 2px;
  line-height: 18px;
  text-align: left;
  font-weight: normal;
  white-space: nowrap;
}

tr > :first-child {
  border-left: 10px solid #2c2c2c;
}

thead tr {
  background: linear-gradient(#303030 50%, #121212 50%);
}

thead tr > :first-child {
  border-left-color: #000;
}

thead th, thead td {
  height: 20px;
}

thead th {
  font-weight: 600;
}

tbody tr {
  background: #404040;
}

tbody tr:nth-child(even) {
  background: #828282;
}

tbody tr:nth-child(even) td {
  height: 19px;
}

.vscroll {
  display: flex;
  flex-direction: column;
  margin-top: 20px;
  background: #666;
}

.hscroll {
  display: flex;
  margin-left: 10px;
  background: #5c5c5c;
}

.vscroll svg, .hscroll svg {
  background: #777;
}

.thumb {
  flex: 1;
  border-radius: 5px;
  background: #3c3c3c;
}

.vscroll .thumb {
  margin-bottom: 20px;
}

.hscroll .thumb {
  margin-right: 64px;
}

/* bottom controls */
.controls {
  display: flex;
  gap: 2px;
  height: 61px;
  background: #232323;
}

.patches {
  flex: 840;
  display: flex;
  gap: 2px;
}

.patches button {
  flex: 1;
  display: flex;
  flex-direction: column;
  padding: 3px 4px 0;
  border: 1px solid #777;
  border-radius: 4px;
  background: linear-gradient(#9c9c9c, #555);
  color: #3a3a3a;
  font-size: 12px;
  font-weight: bold;
  line-height: 22px;
  align-items: center;
}

.patches i {
  width: 100%;
  height: 38px;
  border: 1px solid #aaa;
  border-radius: 4px;
}

.patches .selected {
  background: linear-gradient(#666, #333);
  color: #ddd;
}

.pattern {
  flex: 48;
  display: flex;
  flex-direction: column;
}

.pattern button {
  display: flex;
  align-items: center;
  justify-content: center;
  height: 18px;
  background: linear-gradient(#777, #666);
  border-bottom: 1px solid #222;
}

.pattern button + button {
  height: 43px;
  background: linear-gradient(#6a6a6a, #505050);
}

.transport {
  flex: 274;
  display: flex;
  flex-direction: column;
  gap: 1px;
}

.transport-row {
  flex: 1;
  display: flex;
  gap: 1px;
}

.transport-row button {
  flex: 1;
  display: flex;
  align-items: center;
  justify-content: center;
  background: linear-gradient(#8c8c8c, #5c5c5c);
}

.transport-row .dark {
  background: #333;
}

.big button {
  gap: 16px;
  padding-right: 8px;
  font-family: var(--segoe);
  font-size: 23px;
  line-height: 28px;
  color: #222;
}

.big button + button {
  padding: 0 0 0 4px;
}

/* taskbar */
.taskbar {
  display: flex;
  align-items: center;
  justify-content: flex-end;
  height: 41px;
  border-top: 1px solid #2c3470;
  background: linear-gradient(to right, #3f4698, #4059b2 30%, #4565c0 60%, #4467bb 75%, #4152a5);
}

.apps {
  display: flex;
  flex: 1;
  align-items: center;
  gap: 8px;
  padding-left: 18px;
}

.apps button {
  width: 54px;
  height: 38px;
  padding-left: 10px;
}

.apps .running {
  border: 1px solid #dfe4f6;
  border-right: 4px double #dfe4f6;
  background: #8a97cd;
  width: 57px;
}

.tray {
  display: flex;
  gap: 8px;
  margin-right: 16px;
}

.clock {
  display: flex;
  flex-direction: column;
  width: 58px;
  margin-right: 24px;
  font-family: var(--segoe);
  font-size: 11px;
  line-height: 17px;
  text-align: center;
}
```
